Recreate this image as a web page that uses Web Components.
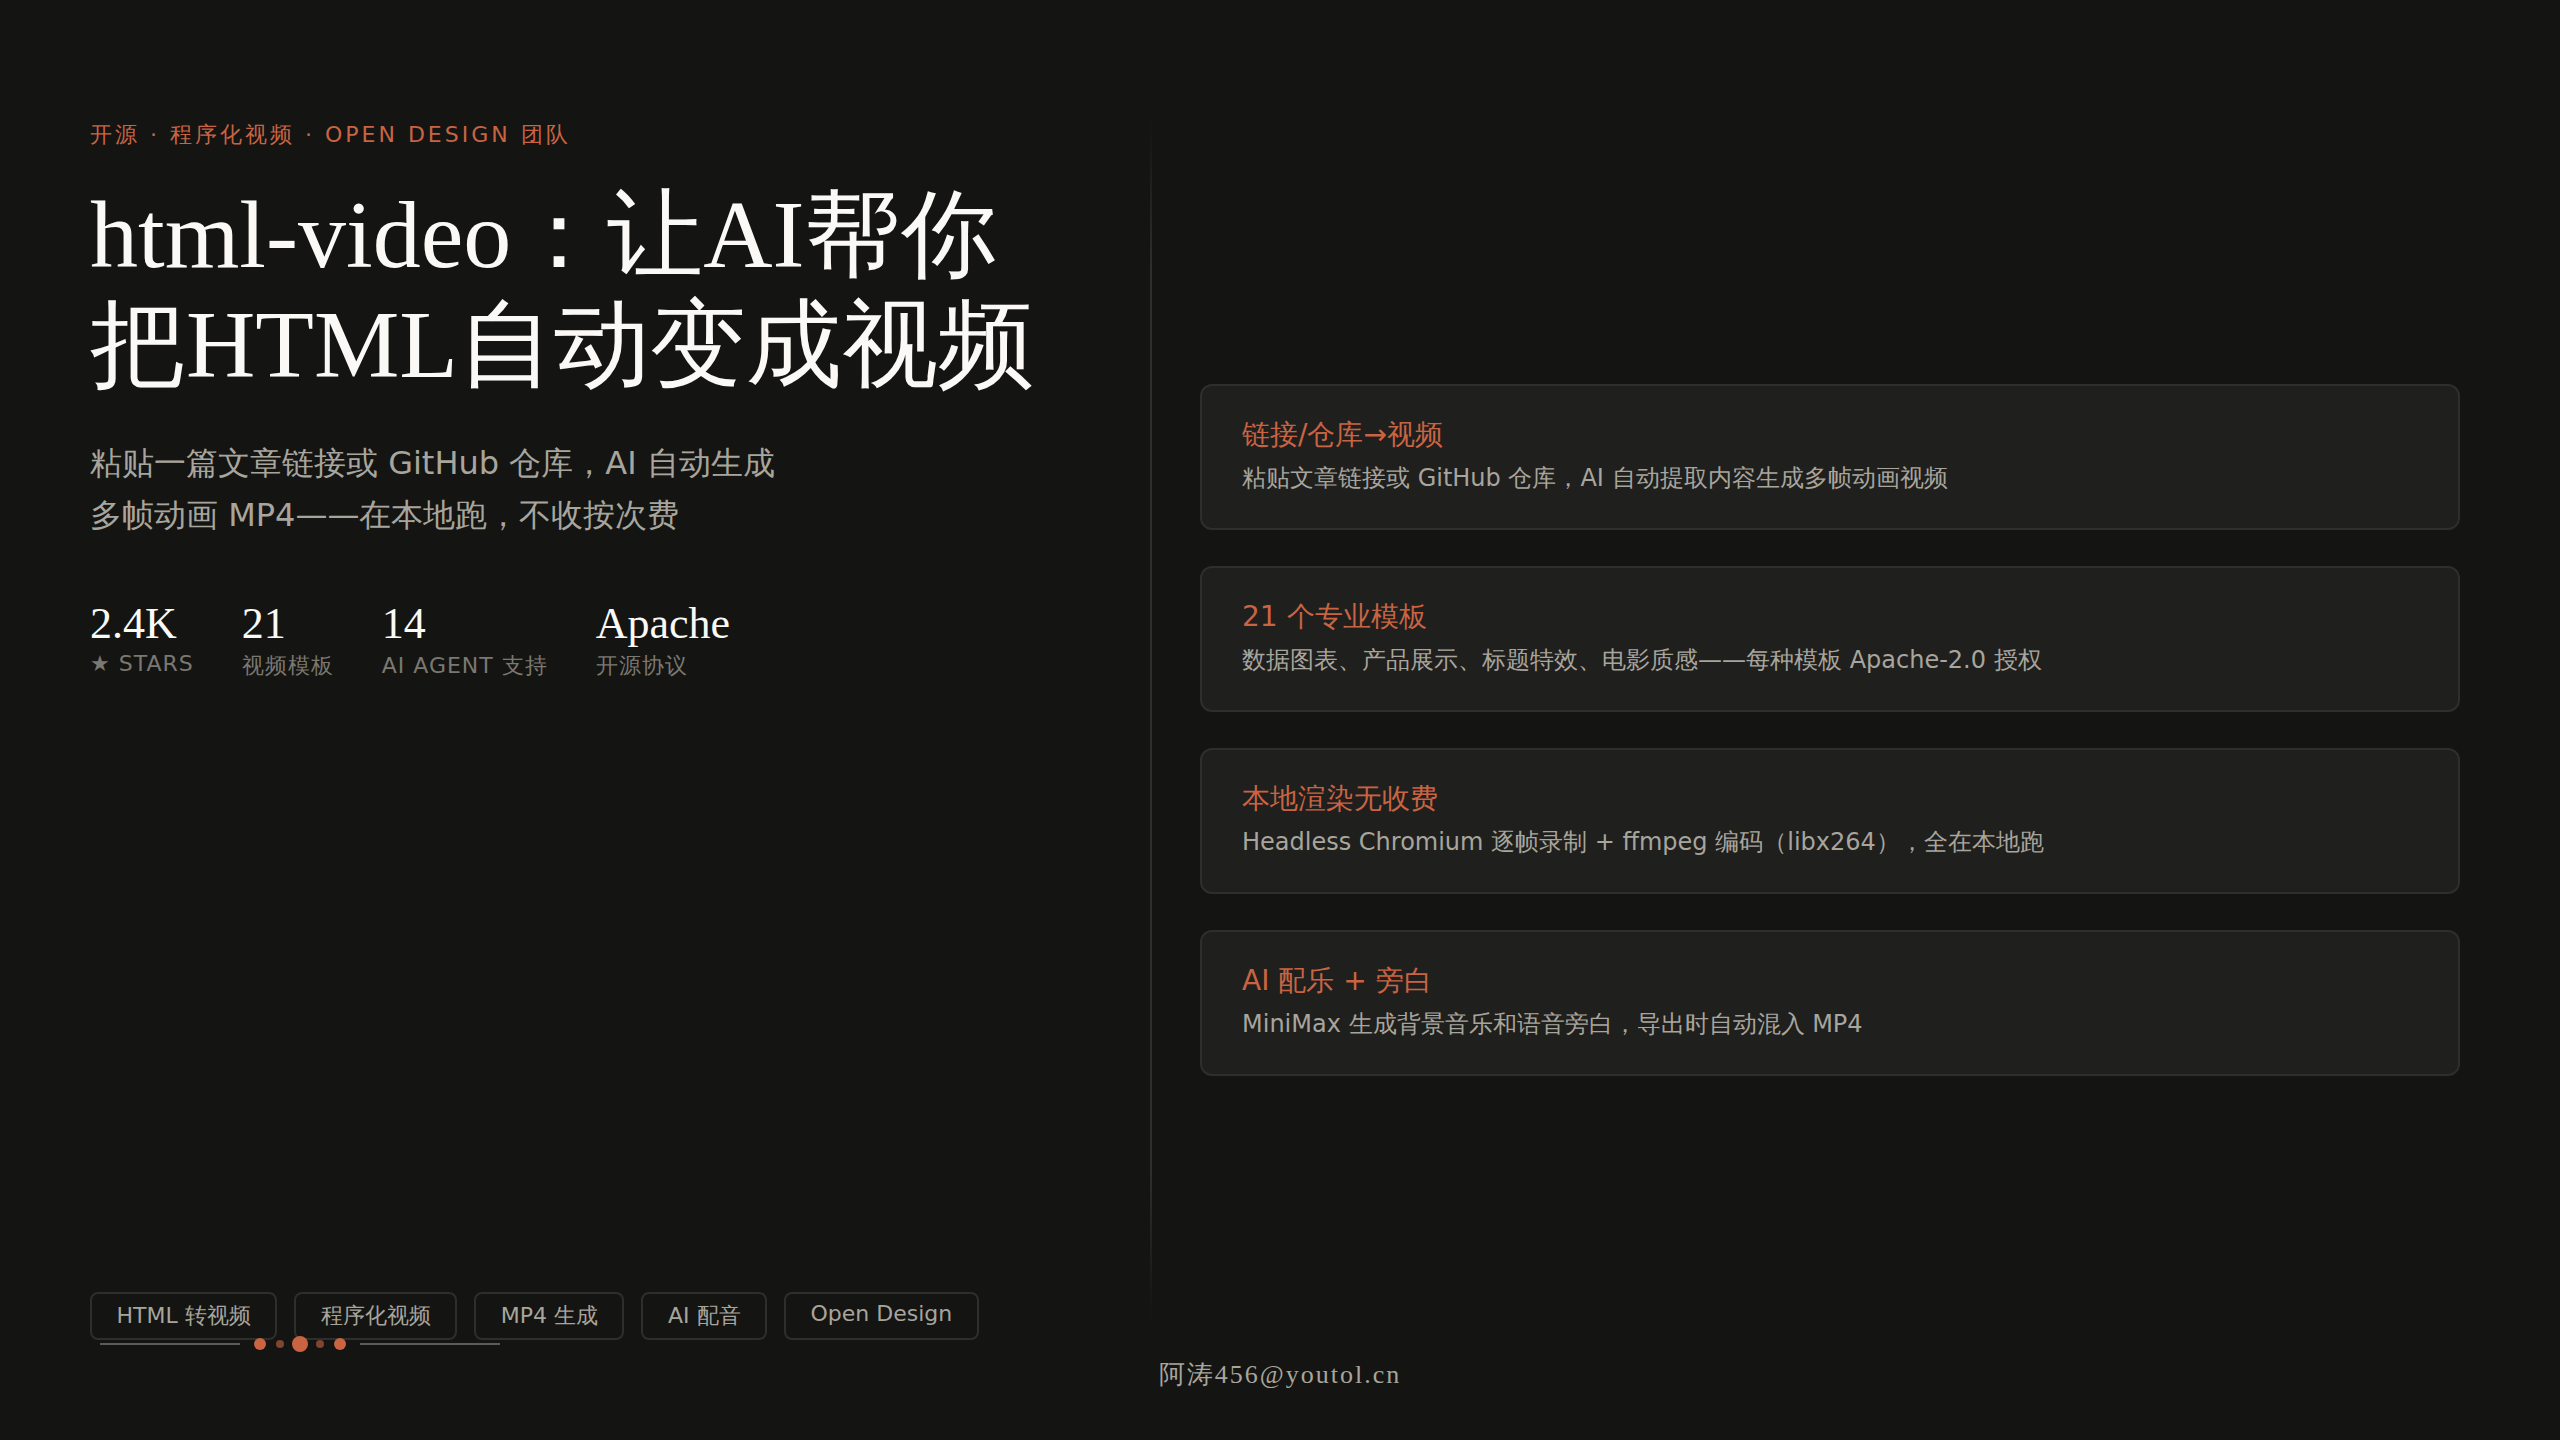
<!DOCTYPE html>
<html>
<head>
<meta charset="utf-8">
<title>html-video</title>
<style>
  html, body { margin: 0; height: 100%; background: #141413; }
  body { font-family: "DejaVu Sans", sans-serif; }
</style>
</head>
<body>
<video-slide>
  <hero-text slot="left"
    eyebrow="开源 · 程序化视频 · OPEN DESIGN 团队"
    line1="html-video：让AI帮你"
    line2="把HTML自动变成视频"
    sub1="粘贴一篇文章链接或 GitHub 仓库，AI 自动生成"
    sub2="多帧动画 MP4——在本地跑，不收按次费"></hero-text>
  <stat-row slot="left">
    <stat-item value="2.4K" label="★ STARS"></stat-item>
    <stat-item value="21" label="视频模板"></stat-item>
    <stat-item value="14" label="AI AGENT 支持"></stat-item>
    <stat-item value="Apache" label="开源协议"></stat-item>
  </stat-row>
  <tag-row slot="tags">
    <tag-pill>HTML 转视频</tag-pill>
    <tag-pill>程序化视频</tag-pill>
    <tag-pill>MP4 生成</tag-pill>
    <tag-pill>AI 配音</tag-pill>
    <tag-pill>Open Design</tag-pill>
  </tag-row>
  <feature-card slot="right" heading="链接/仓库→视频">粘贴文章链接或 GitHub 仓库，AI 自动提取内容生成多帧动画视频</feature-card>
  <feature-card slot="right" heading="21 个专业模板">数据图表、产品展示、标题特效、电影质感——每种模板 Apache-2.0 授权</feature-card>
  <feature-card slot="right" heading="本地渲染无收费">Headless Chromium 逐帧录制 + ffmpeg 编码（libx264），全在本地跑</feature-card>
  <feature-card slot="right" heading="AI 配乐 + 旁白">MiniMax 生成背景音乐和语音旁白，导出时自动混入 MP4</feature-card>
</video-slide>

<script>
const sans = `"DejaVu Sans", sans-serif`;
const serif = `"Liberation Serif", serif`;

customElements.define('video-slide', class extends HTMLElement {
  constructor() {
    super();
    this.attachShadow({ mode: 'open' }).innerHTML = `
      <style>
        :host { display: block; position: relative; width: 2560px; height: 1440px; box-sizing: border-box; overflow: hidden; background: #141413; }
        .cols { display: grid; grid-template-columns: 1150px 1fr; height: 1440px; }
        .left { display: flex; flex-direction: column; box-sizing: border-box; height: 1440px; padding: 120px 90px 100px; }
        .grow { flex: 1; display: flex; flex-direction: column; }
        .right { position: relative; display: flex; flex-direction: column; justify-content: center; gap: 36px; box-sizing: border-box; height: 1440px; padding: 20px 100px 0 50px; }
        .right::before { content: ''; position: absolute; left: 0; top: 120px; bottom: 120px; width: 2px;
          background: linear-gradient(to bottom, transparent, #2e2e2c 12%, #2e2e2c 88%, transparent); }
        .credit { position: absolute; left: 0; right: 0; bottom: 48px; text-align: center; font: 26px ${serif}; letter-spacing: 2px; color: #a8a59c; }
        flourish-line { position: absolute; left: 100px; top: 1336px; }
      </style>
      <div class="cols">
        <div class="left">
          <div class="grow"><slot name="left"></slot></div>
          <slot name="tags"></slot>
        </div>
        <div class="right"><slot name="right"></slot></div>
      </div>
      <flourish-line></flourish-line>
      <div class="credit">阿涛456@youtol.cn</div>`;
  }
});

customElements.define('hero-text', class extends HTMLElement {
  connectedCallback() {
    const a = (n) => this.getAttribute(n);
    this.attachShadow({ mode: 'open' }).innerHTML = `
      <style>
        :host { display: block; }
        .eyebrow { font: 22px/30px ${sans}; letter-spacing: 3px; color: #c96442; }
        h1 { margin: 30px 0 0; font: 400 96px/110.4px ${serif}; color: #faf9f5; }
        p { margin: 36px 0 0; font: 32px/52px ${sans}; color: #a8a59c; }
      </style>
      <div class="eyebrow">${a('eyebrow')}</div>
      <h1>${a('line1')}<br>${a('line2')}</h1>
      <p>${a('sub1')}<br>${a('sub2')}</p>`;
  }
});

customElements.define('stat-row', class extends HTMLElement {
  constructor() {
    super();
    this.attachShadow({ mode: 'open' }).innerHTML = `
      <style>:host { display: flex; gap: 48px; margin-top: 58px; }</style>
      <slot></slot>`;
  }
});

customElements.define('stat-item', class extends HTMLElement {
  connectedCallback() {
    this.attachShadow({ mode: 'open' }).innerHTML = `
      <style>
        :host { display: block; }
        .v { font: 44px/50px ${serif}; color: #faf9f5; }
        .l { margin-top: 2px; font: 22px ${sans}; letter-spacing: 1px; color: #7a7870; }
      </style>
      <div class="v">${this.getAttribute('value')}</div>
      <div class="l">${this.getAttribute('label')}</div>`;
  }
});

customElements.define('tag-row', class extends HTMLElement {
  constructor() {
    super();
    this.attachShadow({ mode: 'open' }).innerHTML = `
      <style>:host { display: flex; gap: 17px; }</style>
      <slot></slot>`;
  }
});

customElements.define('tag-pill', class extends HTMLElement {
  constructor() {
    super();
    this.attachShadow({ mode: 'open' }).innerHTML = `
      <style>
        :host { display: block; padding: 7px 24.5px; border: 2px solid #2e2e2c; border-radius: 8px; font: 22px ${sans}; color: #a8a59c; }
      </style>
      <slot></slot>`;
  }
});

customElements.define('flourish-line', class extends HTMLElement {
  constructor() {
    super();
    this.attachShadow({ mode: 'open' }).innerHTML = `
      <style>
        :host { display: flex; align-items: center; height: 16px; }
        i { display: block; border-radius: 50%; background: #c96442; flex: none; }
        .rule { width: 140px; height: 2px; border-radius: 0; background: #5c5b56; }
        .a { width: 12px; height: 12px; }
        .b { width: 8px; height: 8px; opacity: .6; margin: 0 8px 0 10px; }
        .b.r { margin: 0 10px 0 8px; }
        .c { width: 16px; height: 16px; }
      </style>
      <i class="rule" style="margin-right:14px"></i>
      <i class="a"></i><i class="b"></i><i class="c"></i><i class="b r"></i><i class="a"></i>
      <i class="rule" style="margin-left:14px"></i>`;
  }
});

customElements.define('feature-card', class extends HTMLElement {
  connectedCallback() {
    this.attachShadow({ mode: 'open' }).innerHTML = `
      <style>
        :host { display: block; box-sizing: border-box; height: 146px; padding: 29px 40px 0; background: #1f1f1e; border: 2px solid #2e2e2c; border-radius: 12px; }
        .h { font: 28px/40px ${sans}; color: #c96442; }
        .b { margin-top: 5px; font: 24px/36px ${sans}; color: #a8a59c; }
      </style>
      <div class="h">${this.getAttribute('heading')}</div>
      <div class="b"><slot></slot></div>`;
  }
});
</script>
</body>
</html>
